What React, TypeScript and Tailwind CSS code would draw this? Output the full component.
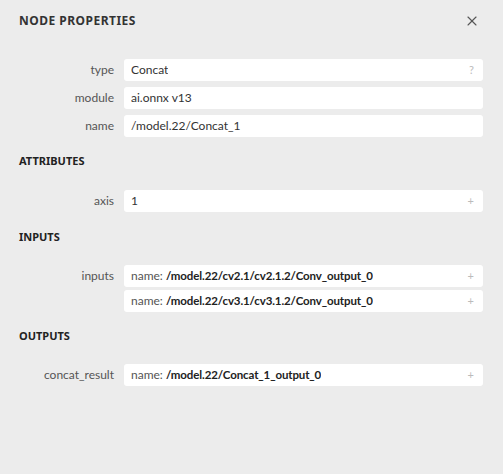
import { X } from 'lucide-react';

type Row = { label: string; values: { prefix?: string; text: string; bold?: boolean }[]; action?: string };

const nodeRows: Row[] = [
  { label: 'type', values: [{ text: 'Concat' }], action: '?' },
  { label: 'module', values: [{ text: 'ai.onnx v13' }] },
  { label: 'name', values: [{ text: '/model.22/Concat_1' }] },
];

function Field({ row }: { row: Row }) {
  return (
    <div className="flex items-start gap-[10px] font-['Lato',sans-serif]">
      <div className="flex h-[22px] w-[95px] shrink-0 items-center justify-end text-[12px] text-[#555]">{row.label}</div>
      <div className="flex flex-1 flex-col gap-[3px]">
        {row.values.map((v, i) => (
          <div key={i} className="flex h-[22px] items-center justify-between rounded-[3px] bg-white pl-[7px] pr-[9px] text-[12px] text-[#333]">
            <span className="truncate">
              {v.prefix && <span className="text-[#555]">{v.prefix} </span>}
              <span className={v.bold ? 'text-[11.5px] font-bold tracking-[-0.01em] text-[#222]' : ''}>{v.text}</span>
            </span>
            {row.action && <span className="text-[11px] text-[#bbb]">{row.action}</span>}
          </div>
        ))}
      </div>
    </div>
  );
}

function SectionTitle({ children, className }: { children: string; className: string }) {
  return <div className={`flex h-[20px] items-center text-[11px] font-bold text-[#222] ${className}`}>{children}</div>;
}

export default function App() {
  return (
    <div className="h-[474px] w-full bg-[#ececec] pl-[19px] pr-[20px] font-['Noto_Sans',sans-serif]">
      <div className="flex h-[42px] items-center justify-between">
        <span className="text-[12px] font-bold tracking-[0.04em] text-[#333]">NODE PROPERTIES</span>
        <X className="mr-[3px] h-[16px] w-[16px] text-[#555]" strokeWidth={1.6} />
      </div>
      <div className="mt-[17px] flex flex-col gap-[6px]">
        {nodeRows.map((r) => (
          <Field key={r.label} row={r} />
        ))}
      </div>
      <SectionTitle className="mt-[14px] mb-[19px]">ATTRIBUTES</SectionTitle>
      <Field row={{ label: 'axis', values: [{ text: '1' }], action: '+' }} />
      <SectionTitle className="mt-[15px] mb-[18px]">INPUTS</SectionTitle>
      <Field
        row={{
          label: 'inputs',
          action: '+',
          values: [
            { prefix: 'name:', text: '/model.22/cv2.1/cv2.1.2/Conv_output_0', bold: true },
            { prefix: 'name:', text: '/model.22/cv3.1/cv3.1.2/Conv_output_0', bold: true },
          ],
        }}
      />
      <SectionTitle className="mt-[14px] mb-[18px]">OUTPUTS</SectionTitle>
      <Field
        row={{
          label: 'concat_result',
          action: '+',
          values: [{ prefix: 'name:', text: '/model.22/Concat_1_output_0', bold: true }],
        }}
      />
    </div>
  );
}
